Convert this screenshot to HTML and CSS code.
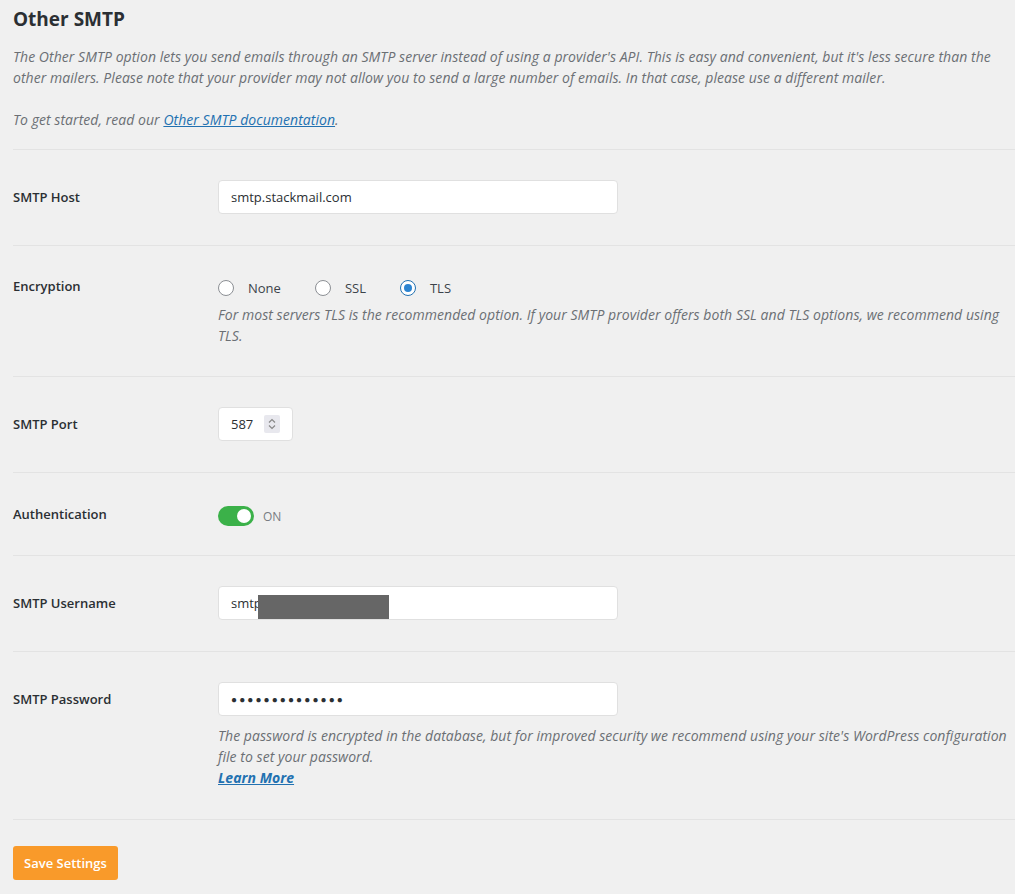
FILE: index.html
```html
<!DOCTYPE html>
<html>
<head>
  <title>Other SMTP</title>
  <link rel="stylesheet" href="styles.css">
</head>
<body>
  <div class="settings">
    <div class="intro">
      <h2>Other SMTP</h2>
      <p class="desc">The Other SMTP option lets you send emails through an SMTP server instead of using a provider's API. This is easy and convenient, but it's less secure than the other mailers. Please note that your provider may not allow you to send a large number of emails. In that case, please use a different mailer.</p>
      <p class="desc">To get started, read our <a href="#">Other SMTP documentation</a>.</p>
    </div>

    <div class="row">
      <div class="label">SMTP Host</div>
      <div class="field">
        <div class="text-input">smtp.stackmail.com</div>
      </div>
    </div>

    <div class="row row-encryption">
      <div class="label label-short">Encryption</div>
      <div class="field">
        <div class="radios">
          <label class="radio"><span class="circle"></span>None</label>
          <label class="radio"><span class="circle"></span>SSL</label>
          <label class="radio"><span class="circle checked"></span>TLS</label>
        </div>
        <p class="desc field-desc">For most servers TLS is the recommended option. If your SMTP provider offers both SSL and TLS options, we recommend using TLS.</p>
      </div>
    </div>

    <div class="row">
      <div class="label">SMTP Port</div>
      <div class="field">
        <div class="text-input port-input">
          587
          <span class="spinner">
            <svg width="10" height="14" viewBox="0 0 10 14">
              <path d="M2 5.5 L5 2.5 L8 5.5" fill="none" stroke="#888" stroke-width="1.2"/>
              <path d="M2 8.5 L5 11.5 L8 8.5" fill="none" stroke="#888" stroke-width="1.2"/>
            </svg>
          </span>
        </div>
      </div>
    </div>

    <div class="row row-auth">
      <div class="label label-toggle">Authentication</div>
      <div class="field">
        <div class="toggle-wrap">
          <span class="toggle"><span class="knob"></span></span>
          <span class="toggle-text">ON</span>
        </div>
      </div>
    </div>

    <div class="row">
      <div class="label">SMTP Username</div>
      <div class="field">
        <div class="text-input redacted-input">smtp<span class="redacted"></span></div>
      </div>
    </div>

    <div class="row">
      <div class="label">SMTP Password</div>
      <div class="field">
        <div class="text-input password">&#9679;&#9679;&#9679;&#9679;&#9679;&#9679;&#9679;&#9679;&#9679;&#9679;&#9679;&#9679;&#9679;&#9679;</div>
        <p class="desc field-desc">The password is encrypted in the database, but for improved security we recommend using your site's WordPress configuration file to set your password.<br><a href="#" class="learn-more">Learn More</a></p>
      </div>
    </div>

    <div class="actions">
      <button class="save-button">Save Settings</button>
    </div>
  </div>
</body>
</html>
```

FILE: styles.css
```css
body {
  font-family: "Open Sans", "Noto Sans", sans-serif;
  background-color: #f0f0f0;
  color: #3c434a;
  margin: 0;
  padding: 0;
}

.settings {
  padding-left: 13px;
}

.intro {
  padding-bottom: 19px;
  border-bottom: 1px solid #e3e3e3;
}

h2 {
  margin: 0;
  padding-top: 6px;
  font-size: 19px;
  line-height: 26px;
  font-weight: 700;
  color: #2b2f33;
}

.desc {
  font-style: italic;
  font-size: 14px;
  letter-spacing: 0.05px;
  line-height: 21px;
  color: #6b6f74;
  margin: 0;
}

.intro .desc:first-of-type {
  margin-top: 14px;
  margin-bottom: 21px;
}

a {
  color: #2271b1;
}

.row {
  display: flex;
  padding: 30px 0 31px;
  border-bottom: 1px solid #e3e3e3;
}

.row-encryption {
  padding-bottom: 30px;
}

.label {
  width: 205px;
  flex-shrink: 0;
  font-size: 13px;
  font-weight: 600;
  color: #2b2f33;
  line-height: 34px;
}

.label-short {
  line-height: 20px;
}

.label-toggle {
  line-height: 22px;
}

.field {
  flex-grow: 1;
}

.text-input {
  box-sizing: border-box;
  width: 400px;
  height: 34px;
  padding: 0 12px;
  background-color: #fff;
  border: 1px solid #e0e0e0;
  border-radius: 4px;
  font-size: 13px;
  line-height: 32px;
  color: #2b2f33;
}

.radios {
  display: flex;
  align-items: center;
  height: 24px;
}

.radio {
  display: flex;
  align-items: center;
  gap: 14px;
  margin-right: 34px;
  font-size: 13px;
  color: #3c434a;
}

.circle {
  box-sizing: border-box;
  width: 16px;
  height: 16px;
  border: 1px solid #8c8f94;
  border-radius: 50%;
  background-color: #fff;
  position: relative;
}

.circle.checked {
  border-color: #2271b1;
}

.circle.checked::after {
  content: "";
  position: absolute;
  top: 3px;
  left: 3px;
  width: 8px;
  height: 8px;
  border-radius: 50%;
  background-color: #2c84d1;
}

.field-desc {
  margin-top: 4px;
}

.port-input {
  width: 75px;
  display: flex;
  align-items: center;
  justify-content: space-between;
  padding-right: 12px;
}

.spinner {
  display: flex;
  align-items: center;
  justify-content: center;
  width: 16px;
  height: 18px;
  background-color: #e8e8ee;
  border-radius: 2px;
}

.row-auth {
  padding-bottom: 28px;
}

.toggle-wrap {
  display: flex;
  align-items: center;
  gap: 9px;
  height: 22px;
  margin-top: 2px;
}

.toggle {
  box-sizing: border-box;
  width: 36px;
  height: 20px;
  border-radius: 10px;
  background-color: #3bb149;
  padding: 3px;
  display: flex;
  justify-content: flex-end;
}

.knob {
  width: 14px;
  height: 14px;
  border-radius: 50%;
  background-color: #fff;
}

.toggle-text {
  font-size: 12px;
  color: #787c82;
}

.redacted-input {
  position: relative;
}

.redacted {
  position: absolute;
  left: 39px;
  top: 8px;
  width: 131px;
  height: 24px;
  background-color: #666;
}

.password {
  font-size: 10px;
  letter-spacing: 2.1px;
  color: #2b2f33;
}

.password + .field-desc {
  margin-top: 9px;
}

.learn-more {
  font-weight: 700;
  color: #2271b1;
}

.actions {
  padding-top: 26px;
}

.save-button {
  background-color: #f99a2a;
  color: #fff;
  border: none;
  border-radius: 3px;
  font-family: "Open Sans", "Noto Sans", sans-serif;
  font-size: 13px;
  font-weight: 600;
  padding: 0 11px;
  height: 34px;
  cursor: pointer;
}
```
